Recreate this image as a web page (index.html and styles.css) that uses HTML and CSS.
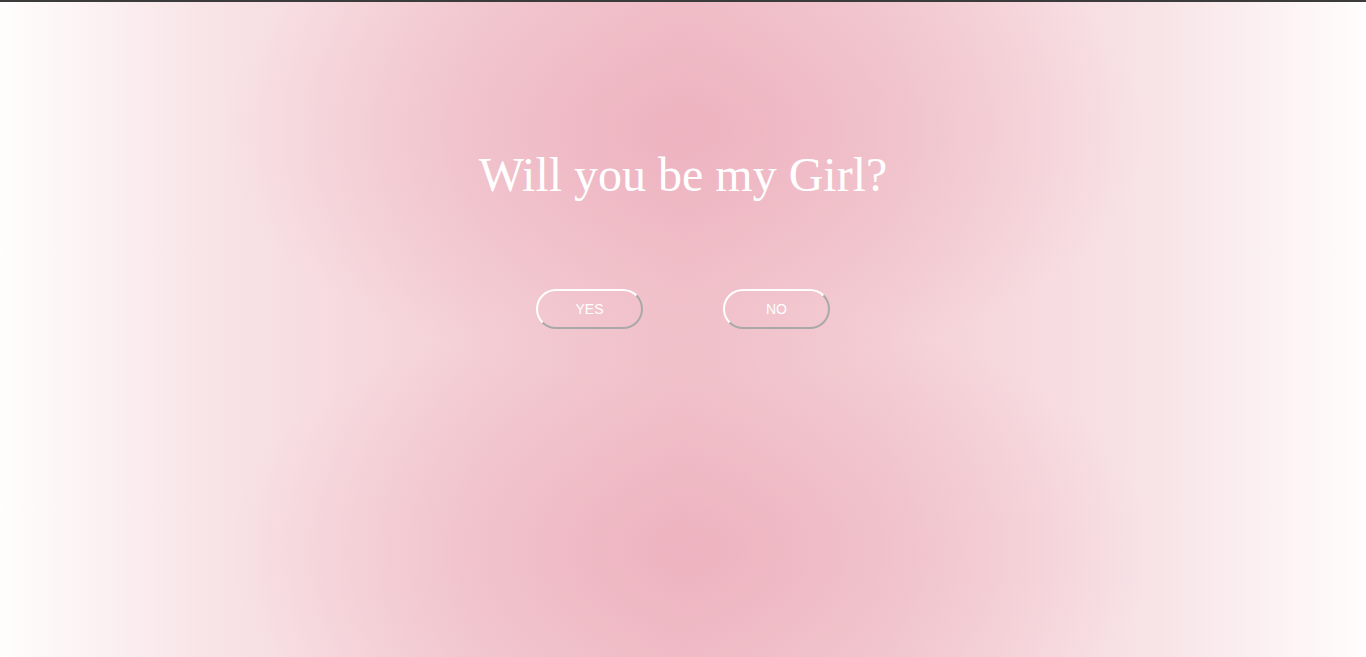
FILE: index.html
```html
<!DOCTYPE html>
<html>
<head>
<meta charset="utf-8">
<link rel="stylesheet" href="styles.css">
</head>
<body>
<main class="page">
  <h1 class="title">Will you be my Girl?</h1>
  <div class="buttons">
    <button class="btn">YES</button>
    <button class="btn">NO</button>
  </div>
</main>
</body>
</html>
```
FILE: styles.css
```css
html, body {
  margin: 0;
  padding: 0;
  height: 100%;
}
body {
  border-top: 2px solid #3b3b3b;
  box-sizing: border-box;
  background:
    radial-gradient(ellipse 460px 250px at 50% 130px, rgba(234, 166, 182, 0.6), rgba(234, 166, 182, 0)),
    radial-gradient(ellipse 460px 250px at 50.5% 550px, rgba(234, 166, 182, 0.6), rgba(234, 166, 182, 0)),
    linear-gradient(to right, #fffdfd 0%, #f8e4e7 15%, #f4d0d6 35%, #f2c6ce 50%, #f4d0d6 65%, #f8e4e7 85%, #fffdfd 100%);
  overflow: hidden;
}
.page {
  display: flex;
  flex-direction: column;
  align-items: center;
  padding-top: 141px;
}
.title {
  margin: 0;
  font-family: "Liberation Serif", "Times New Roman", serif;
  font-weight: normal;
  font-size: 48px;
  line-height: 64px;
  color: #ffffff;
}
.buttons {
  display: flex;
  gap: 80px;
  margin-top: 82px;
}
.btn {
  width: 107px;
  height: 40px;
  border-radius: 20px;
  border: 2px solid;
  border-color: #ffffff #a9a9a9 #a9a9a9 #ffffff;
  background: transparent;
  color: #ffffff;
  font-family: "Liberation Sans", Arial, sans-serif;
  font-size: 14px;
  padding: 0;
  cursor: pointer;
}
```
